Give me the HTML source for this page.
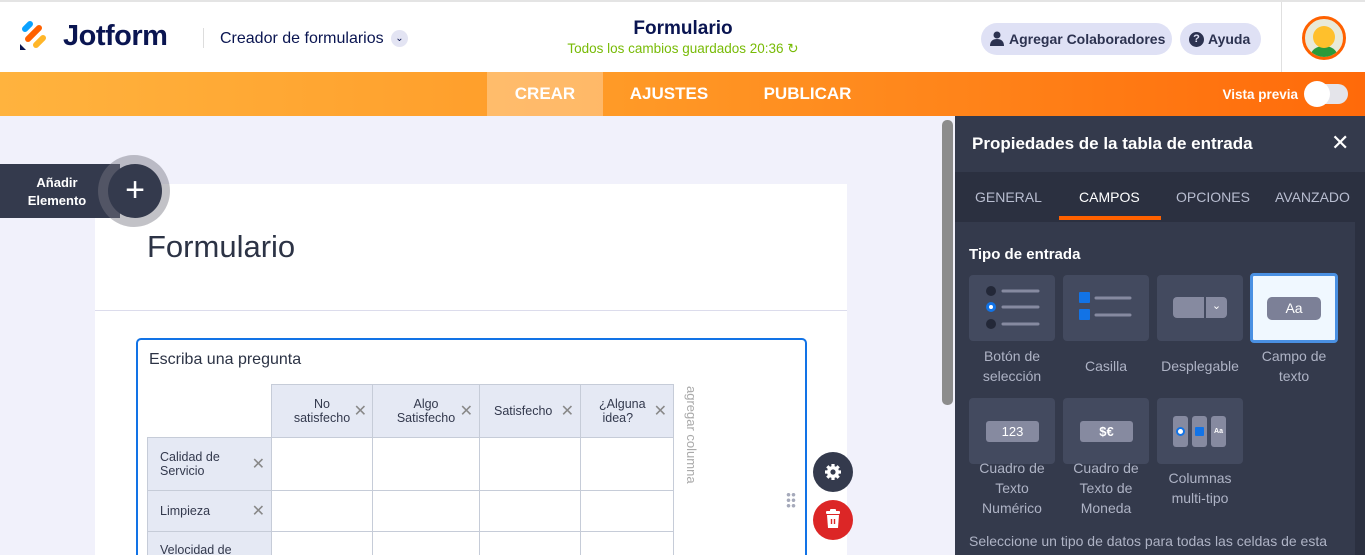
<!DOCTYPE html>
<html style="width:1365px;height:555px;overflow:hidden"><head><meta charset="utf-8"><style>
*{box-sizing:border-box;margin:0;padding:0}
body{width:1365px;height:555px;overflow:hidden;font-family:"Liberation Sans",sans-serif;background:#f1f1fb;position:relative}
.abs{position:absolute}
.top{left:0;top:0;width:1365px;height:72px;background:#fff;border-top:2px solid #e4e4e4}
.bar{left:0;top:72px;width:1365px;height:44px;background:linear-gradient(90deg,#ffb33e,#ff9a27 45%,#ff6a0a)}
.bar .t{position:absolute;top:0;height:44px;line-height:44px;color:#fff;font-size:17px;font-weight:bold;text-align:center}
.pill{top:21px;height:32px;border-radius:16px;background:#dfe1f5;color:#2c3250;font-size:14px;font-weight:bold;line-height:32px}
.panel{left:955px;top:116px;width:410px;height:439px;background:#343a4c}
.tabs{left:955px;top:172px;width:410px;height:50px;background:#2b3040}
.tabs span{position:absolute;top:0;line-height:50px;font-size:14px;color:#b8bdd0}
.card{width:86px;height:66px;background:#434a5f;border-radius:4px}
.lbl{width:96px;text-align:center;color:#aeb3c5;font-size:14px;line-height:20px}
table{border-collapse:collapse;position:absolute;left:147px;top:384px;font-size:12.5px;color:#33394d}
td{border:1px solid #c6ccd8;padding:0}
.h{background:#e5e9f4;text-align:center;position:relative}
.x{color:#888;font-size:16px;position:absolute;right:6px;top:50%;transform:translateY(-50%)}
</style></head><body>
<div class="abs top">
  <svg class="abs" style="left:19px;top:18px" width="30" height="32" viewBox="0 0 30 32">
    <g stroke-linecap="round" stroke-width="6">
      <path d="M6 9L11 4" stroke="#0aa2ff"/>
      <path d="M9 19L20 8" stroke="#ff6100"/>
      <path d="M17 25L24 18" stroke="#ffb629"/>
    </g>
    <path d="M1 24v6h6z" fill="#0a1551"/>
  </svg>
  <div class="abs" style="left:63px;top:18px;font-size:29px;font-weight:bold;color:#0a1551;letter-spacing:-0.5px">Jotform</div>
  <div class="abs" style="left:203px;top:26px;width:1px;height:20px;background:#ddd"></div>
  <div class="abs" style="left:220px;top:28px;font-size:16px;color:#0a1551">Creador de formularios</div>
  <div class="abs" style="left:391px;top:28px;width:17px;height:17px;border-radius:50%;background:#e3e4f3;color:#0a1551;font-size:10px;text-align:center;line-height:17px">&#8964;</div>
  <div class="abs" style="left:540px;top:16px;width:286px;text-align:center;font-size:19px;font-weight:bold;color:#0a1551">Formulario</div>
  <div class="abs" style="left:540px;top:39px;width:286px;text-align:center;font-size:13.5px;color:#78bb07">Todos los cambios guardados 20:36 ↻</div>
  <div class="abs pill" style="left:981px;width:191px;padding-left:28px">Agregar Colaboradores</div>
  <svg class="abs" style="left:990px;top:29px" width="14" height="15" viewBox="0 0 14 15"><circle cx="7" cy="4" r="3.5" fill="#2c3250"/><path d="M0 15c0-5 3-7 7-7s7 2 7 7z" fill="#2c3250"/></svg>
  <div class="abs pill" style="left:1180px;width:81px;padding-left:28px">Ayuda</div>
  <div class="abs" style="left:1189px;top:30px;width:15px;height:15px;border-radius:50%;background:#2c3250;color:#dfe1f5;font-size:11px;text-align:center;line-height:15px;font-weight:bold">?</div>
  <div class="abs" style="left:1281px;top:0;width:1px;height:70px;background:#e0e0e0"></div>
  <div class="abs" style="left:1302px;top:14px;width:44px;height:44px;border-radius:50%;border:3px solid #ff6100;background:#e9ead9;overflow:hidden">
    <div class="abs" style="left:6px;top:27px;width:26px;height:18px;border-radius:50% 50% 0 0;background:#2a9a3a"></div>
    <div class="abs" style="left:8px;top:7px;width:22px;height:22px;border-radius:50%;background:#ffc02c"></div>
  </div>
</div>
<div class="abs bar">
  <div class="t" style="left:487px;width:116px;background:rgba(255,255,255,.3)">CREAR</div>
  <div class="t" style="left:614px;width:110px">AJUSTES</div>
  <div class="t" style="left:750px;width:115px">PUBLICAR</div>
  <div class="abs" style="left:1180px;width:118px;text-align:right;top:15px;color:#fff;font-size:13.5px;font-weight:bold">Vista previa</div>
  <div class="abs" style="left:1305px;top:12px;width:43px;height:20px;border-radius:10px;background:#e4e4ea"></div>
  <div class="abs" style="left:1304px;top:9px;width:26px;height:26px;border-radius:50%;background:#fff"></div>
</div>
<!-- canvas -->
<div class="abs" style="left:942px;top:120px;width:11px;height:285px;border-radius:5px;background:#8c8c8c"></div>
<div class="abs" style="left:95px;top:184px;width:752px;height:371px;background:#fff"></div>
<div class="abs" style="left:95px;top:310px;width:752px;height:1px;background:#dcdcec"></div>
<div class="abs" style="left:147px;top:229px;font-size:31px;color:#2c3345">Formulario</div>
<div class="abs" style="left:0;top:164px;width:120px;height:54px;background:#343a4d"></div>
<div class="abs" style="left:12px;top:174px;width:90px;text-align:center;color:#fff;font-size:13px;font-weight:bold;line-height:18px">Añadir<br>Elemento</div>
<div class="abs" style="left:98px;top:155px;width:72px;height:72px;border-radius:50%;background:rgba(120,120,130,.45)"></div>
<div class="abs" style="left:108px;top:164px;width:54px;height:54px;border-radius:50%;background:#343a4d;color:#fff;font-size:34px;text-align:center;line-height:52px;font-weight:300">+</div>
<div class="abs" style="left:136px;top:338px;width:671px;height:240px;border:2px solid #1273e6;border-radius:5px"></div>
<div class="abs" style="left:149px;top:351px;font-size:16px;color:#2c3345">Escriba una pregunta</div>
<table>
<tr style="height:53px"><td style="border:none;width:124px;background:#fff"></td>
<td class="h" style="width:101px">No<br>satisfecho<span class="x" style="position:absolute;right:5px">✕</span></td>
<td class="h" style="width:107px">Algo<br>Satisfecho<span class="x">✕</span></td>
<td class="h" style="width:101px;text-align:left;padding-left:14px">Satisfecho<span class="x">✕</span></td>
<td class="h" style="width:93px;text-align:left;padding-left:18px">¿Alguna<br>&nbsp;idea?<span class="x">✕</span></td></tr>
<tr style="height:53px"><td class="h" style="text-align:left;padding-left:12px">Calidad de<br>Servicio<span class="x">✕</span></td><td></td><td></td><td></td><td></td></tr>
<tr style="height:41px"><td class="h" style="text-align:left;padding-left:12px">Limpieza<span class="x">✕</span></td><td></td><td></td><td></td><td></td></tr>
<tr style="height:40px"><td class="h" style="text-align:left;padding-left:12px;vertical-align:top;padding-top:11px">Velocidad de<span class="x" style="top:80%">✕</span></td><td></td><td></td><td></td><td></td></tr>
</table>
<div class="abs" style="left:684px;top:386px;writing-mode:vertical-rl;font-size:13px;color:#aaa">agregar columna</div>
<div class="abs" style="left:786px;top:492px;width:10px;height:16px;background:radial-gradient(circle,#a6aabb 1.6px,transparent 2px) 0 0/5px 5.5px"></div>
<div class="abs" style="left:813px;top:452px;width:40px;height:40px;border-radius:50%;background:#343a4d"></div>
<svg class="abs" style="left:823px;top:462px" width="20" height="20" viewBox="0 0 20 20"><g fill="#fff"><circle cx="10" cy="10" r="6"/><g stroke="#fff" stroke-width="3.2"><path d="M10 2v16M2 10h16M4.3 4.3l11.4 11.4M15.7 4.3L4.3 15.7"/></g></g><circle cx="10" cy="10" r="2.6" fill="#343a4d"/></svg>
<div class="abs" style="left:813px;top:500px;width:40px;height:40px;border-radius:50%;background:#dc2626"></div>
<svg class="abs" style="left:825px;top:509px" width="16" height="20" viewBox="0 0 16 20"><rect x="1" y="2" width="14" height="3" rx="1" fill="#fff"/><rect x="5" y="0" width="6" height="3" rx="1" fill="#fff"/><path d="M2 6h12l-1 13H3z" fill="#fff"/><path d="M6.5 10v5M9.5 10v5" stroke="#dc2626" stroke-width="1.4"/></svg>
<!-- panel -->
<div class="abs panel"></div>
<div class="abs" style="left:972px;top:134px;color:#fff;font-size:17px;font-weight:bold">Propiedades de la tabla de entrada</div>
<div class="abs" style="left:1331px;top:130px;color:#fff;font-size:22px">✕</div>
<div class="abs tabs">
  <span style="left:20px">GENERAL</span>
  <span style="left:124px;color:#fff">CAMPOS</span>
  <span style="left:221px">OPCIONES</span>
  <span style="left:320px">AVANZADO</span>
  <div class="abs" style="left:104px;top:44px;width:102px;height:4px;background:#ff6100"></div>
</div>
<div class="abs" style="left:1355px;top:222px;width:10px;height:333px;background:#2b3040"></div>
<div class="abs" style="left:969px;top:246px;color:#fff;font-size:15px;font-weight:bold">Tipo de entrada</div>
<div class="abs card" style="left:969px;top:275px"></div>
<svg class="abs" style="left:983px;top:285px" width="60" height="46"><g fill="#232838"><circle cx="8" cy="6" r="5"/><circle cx="8" cy="39" r="5"/></g><circle cx="8" cy="22" r="5" fill="#1273e6"/><circle cx="8" cy="22" r="2" fill="#fff"/><g stroke="#868aa0" stroke-width="3" stroke-linecap="round"><path d="M20 6h35M20 22h35M20 39h35"/></g></svg>
<div class="abs card" style="left:1063px;top:275px"></div>
<svg class="abs" style="left:1079px;top:292px" width="56" height="32"><rect x="0" y="0" width="11" height="11" rx="1" fill="#1273e6"/><rect x="0" y="17" width="11" height="11" rx="1" fill="#1273e6"/><g stroke="#868aa0" stroke-width="3" stroke-linecap="round"><path d="M17 6h34M17 23h34"/></g></svg>
<div class="abs card" style="left:1157px;top:275px"></div>
<div class="abs" style="left:1173px;top:297px;width:54px;height:21px;border-radius:4px;background:#868aa0"></div>
<div class="abs" style="left:1204px;top:297px;width:2px;height:21px;background:#434a5f"></div>
<div class="abs" style="left:1206px;top:297px;width:21px;height:21px;color:#fff;font-size:11px;text-align:center;line-height:19px">⌄</div>
<div class="abs" style="left:1250px;top:273px;width:88px;height:70px;background:#f0f8ff;border:3px solid #4a90e2;border-radius:4px"></div>
<div class="abs" style="left:1267px;top:297px;width:54px;height:23px;border-radius:5px;background:#7c8097;color:#fff;font-size:14px;text-align:center;line-height:23px">Aa</div>
<div class="abs lbl" style="left:964px;top:346px">Botón de<br>selección</div>
<div class="abs lbl" style="left:1058px;top:356px">Casilla</div>
<div class="abs lbl" style="left:1152px;top:356px">Desplegable</div>
<div class="abs lbl" style="left:1246px;top:346px">Campo de<br>texto</div>
<div class="abs card" style="left:969px;top:398px"></div>
<div class="abs" style="left:986px;top:421px;width:53px;height:21px;border-radius:3px;background:#868aa0;color:#fff;font-size:13px;text-align:center;line-height:21px">123</div>
<div class="abs card" style="left:1063px;top:398px"></div>
<div class="abs" style="left:1080px;top:421px;width:53px;height:21px;border-radius:3px;background:#868aa0;color:#fff;font-size:13px;font-weight:bold;text-align:center;line-height:21px">$€</div>
<div class="abs card" style="left:1157px;top:398px"></div>
<div class="abs" style="left:1173px;top:416px;width:15px;height:31px;border-radius:3px;background:#868aa0"></div>
<div class="abs" style="left:1192px;top:416px;width:15px;height:31px;border-radius:3px;background:#868aa0"></div>
<div class="abs" style="left:1211px;top:416px;width:15px;height:31px;border-radius:3px;background:#868aa0;color:#fff;font-size:7px;font-weight:bold;text-align:center;line-height:31px">Aa</div>
<div class="abs" style="left:1176px;top:427px;width:9px;height:9px;border-radius:50%;background:#fff;border:2.5px solid #1273e6"></div>
<div class="abs" style="left:1195px;top:427px;width:9px;height:9px;border-radius:1px;background:#1273e6"></div>
<div class="abs lbl" style="left:964px;top:458px">Cuadro de<br>Texto<br>Numérico</div>
<div class="abs lbl" style="left:1058px;top:458px">Cuadro de<br>Texto de<br>Moneda</div>
<div class="abs lbl" style="left:1152px;top:468px">Columnas<br>multi-tipo</div>
<div class="abs" style="left:969px;top:533px;color:#aeb3c5;font-size:14px">Seleccione un tipo de datos para todas las celdas de esta</div>
</body></html>
